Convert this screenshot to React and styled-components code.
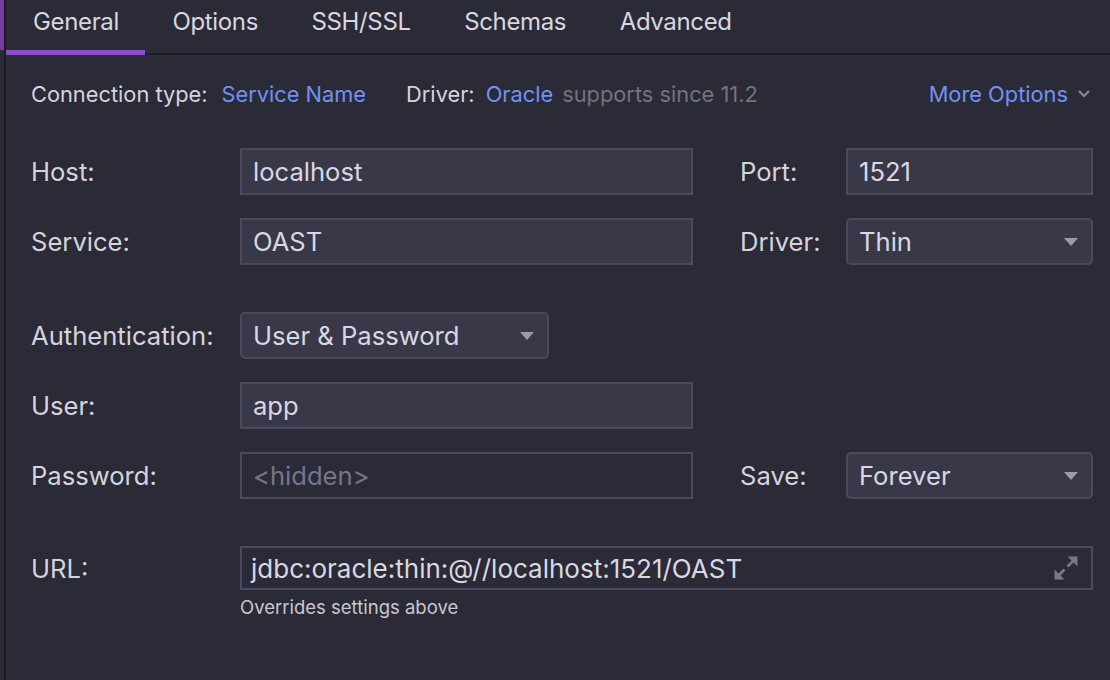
import React from "react";
import styled, { createGlobalStyle } from "styled-components";

const Global = createGlobalStyle`
  html, body { margin: 0; padding: 0; background: #2b2a37; }
  body {
    font-family: Inter, "Noto Sans", "Liberation Sans", sans-serif;
    color: #d5d4dd;
    -webkit-font-smoothing: antialiased;
  }
`;

const Frame = styled.div`
  display: flex;
  width: 1110px;
  height: 680px;
  overflow: hidden;
  background: #2b2a37;
`;

const Rail = styled.div`
  width: 4px;
  flex: none;
  display: flex;
  flex-direction: column;
`;

const RailMark = styled.div`
  height: 50px;
  background: #7a3d9d;
`;

const Panel = styled.div`
  flex: 1;
  border-left: 2px solid #1d1c25;
  display: flex;
  flex-direction: column;
`;

const TabBar = styled.div`
  display: flex;
  height: 55px;
  box-sizing: border-box;
  box-shadow: inset 0 -2px 0 #1e1d26;
`;

const Tab = styled.div`
  box-sizing: border-box;
  height: 55px;
  padding: 6px 26.5px 0 27px;
  font-size: 24px;
  letter-spacing: -0.35px;
  line-height: 32px;
  color: #d8d7e0;
  border-bottom: 5px solid ${(p) => (p.$active ? "#8b4cc6" : "transparent")};
  white-space: nowrap;
`;

const Body = styled.div`
  padding: 25px 17px 0 25px;
  display: flex;
  flex-direction: column;
`;

const InfoRow = styled.div`
  display: flex;
  align-items: center;
  height: 28px;
  font-size: 21.8px;
  white-space: nowrap;
`;

const InfoLabel = styled.span`
  color: #d5d4dd;
  margin-right: ${(p) => p.$gap || 12}px;
`;

const Link = styled.span`
  color: #7092f2;
  margin-right: ${(p) => p.$gap || 0}px;
`;

const Muted = styled.span`
  color: #74727f;
`;

const Spacer = styled.div`
  flex: 1;
`;

const MoreOptions = styled.span`
  display: flex;
  align-items: center;
  gap: 9px;
  margin-right: 2px;
  color: #7092f2;
`;

const Row = styled.div`
  display: grid;
  grid-template-columns: 209px 453px 47px 106px 247px;
  align-items: center;
  margin-top: ${(p) => p.$top}px;
`;

const Label = styled.div`
  font-size: 25.6px;
  color: #d5d4dd;
  white-space: nowrap;
  grid-column: ${(p) => p.$col || "auto"};
`;

const Field = styled.div`
  box-sizing: border-box;
  height: ${(p) => p.$h || 47}px;
  width: ${(p) => (p.$w ? `${p.$w}px` : "auto")};
  display: flex;
  align-items: center;
  padding: 0 12px 0 ${(p) => p.$pl || 11}px;
  font-size: ${(p) => p.$size || 25.6}px;
  color: ${(p) => (p.$placeholder ? "#77758a" : "#d9d8e1")};
  background: ${(p) => (p.$flat ? "#2b2a37" : "#393849")};
  border: 2px solid #4a495e;
  border-radius: ${(p) => (p.$select ? 5 : 0)}px;
  grid-column: ${(p) => p.$col || "auto"};
  white-space: nowrap;
`;

const FieldText = styled.span`
  flex: 1;
`;

const Hint = styled.div`
  font-size: 18.5px;
  color: #c9c8d2;
  margin: 6px 0 0 209px;
`;

const Caret = () => (
  <svg width="16" height="10" viewBox="0 0 16 10">
    <path d="M1 1 L15 1 L8 9 Z" fill="#9b99aa" />
  </svg>
);

const Chevron = () => (
  <svg width="14" height="10" viewBox="0 0 14 10">
    <path d="M2 2 L7 7 L12 2" fill="none" stroke="#8a88a0" strokeWidth="2" />
  </svg>
);

const Expand = () => (
  <svg width="26" height="26" viewBox="0 0 26 26">
    <path d="M1.5 24.5 L1.5 14.5 L11.5 24.5 Z" fill="#787690" />
    <path d="M5 21 L11.5 14.5" stroke="#787690" strokeWidth="2.8" />
    <path d="M24.5 1.5 L24.5 11.5 L14.5 1.5 Z" fill="#787690" />
    <path d="M21 5 L14.5 11.5" stroke="#787690" strokeWidth="2.8" />
  </svg>
);

const Select = ({ value, col, w }) => (
  <Field $select $col={col} $w={w}>
    <FieldText>{value}</FieldText>
    <Caret />
  </Field>
);

export default function App() {
  return (
    <>
      <Global />
      <Frame>
        <Rail>
          <RailMark />
        </Rail>
        <Panel>
          <TabBar>
            <Tab $active>General</Tab>
            <Tab>Options</Tab>
            <Tab>SSH/SSL</Tab>
            <Tab>Schemas</Tab>
            <Tab>Advanced</Tab>
          </TabBar>
          <Body>
            <InfoRow>
              <InfoLabel $gap={14}>Connection type:</InfoLabel>
              <Link $gap={40}>Service Name</Link>
              <InfoLabel $gap={11}>Driver:</InfoLabel>
              <Link $gap={9}>Oracle</Link>
              <Muted>supports since 11.2</Muted>
              <Spacer />
              <MoreOptions>
                More Options
                <Chevron />
              </MoreOptions>
            </InfoRow>

            <Row $top={40}>
              <Label>Host:</Label>
              <Field>localhost</Field>
              <Label $col="4">Port:</Label>
              <Field>1521</Field>
            </Row>
            <Row $top={23}>
              <Label>Service:</Label>
              <Field>OAST</Field>
              <Label $col="4">Driver:</Label>
              <Select value="Thin" />
            </Row>

            <Row $top={47}>
              <Label>Authentication:</Label>
              <Select value="User & Password" w={309} />
            </Row>
            <Row $top={23}>
              <Label>User:</Label>
              <Field>app</Field>
            </Row>
            <Row $top={23}>
              <Label>Password:</Label>
              <Field $flat $placeholder>&lt;hidden&gt;</Field>
              <Label $col="4">Save:</Label>
              <Select value="Forever" />
            </Row>

            <Row $top={47}>
              <Label>URL:</Label>
              <Field $flat $h={44} $size={26} $pl={9} $col="2 / 6">
                <FieldText>jdbc:oracle:thin:@//localhost:1521/OAST</FieldText>
                <Expand />
              </Field>
            </Row>
            <Hint>Overrides settings above</Hint>
          </Body>
        </Panel>
      </Frame>
    </>
  );
}
